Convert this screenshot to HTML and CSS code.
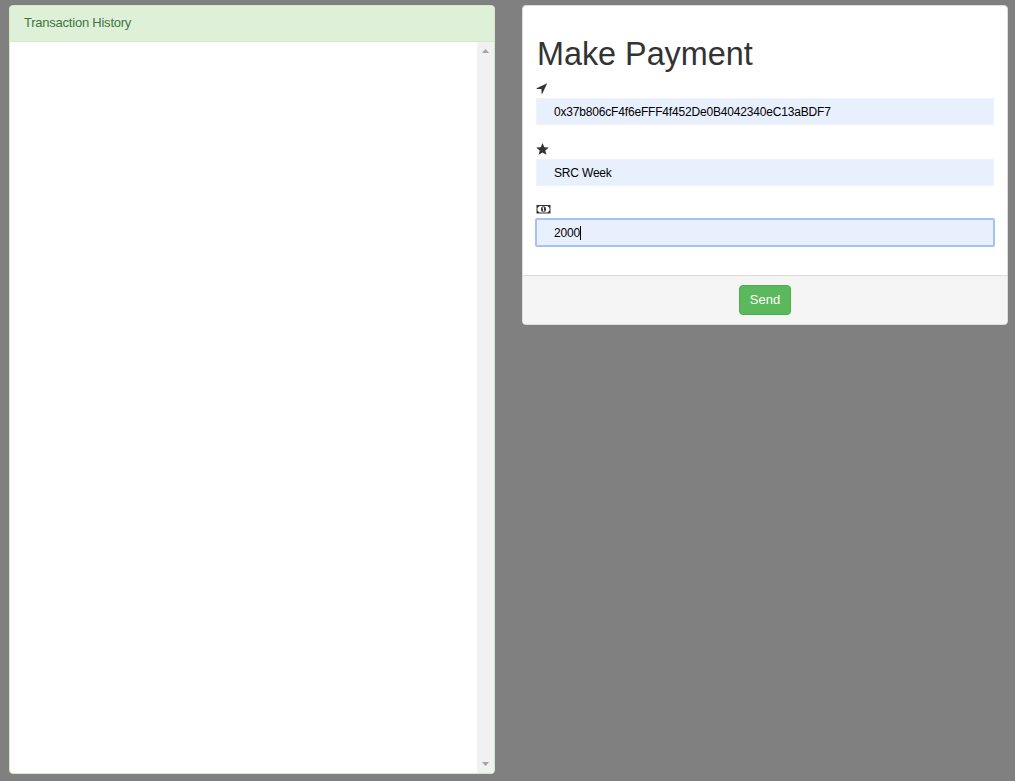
FILE: index.html
```
<!DOCTYPE html>
<html lang="en">
<head>
<meta charset="utf-8">
<title>Make Payment</title>
<link rel="stylesheet" href="styles.css">
</head>
<body>
<main class="page">
  <section class="panel history">
    <header class="history-heading">Transaction History</header>
    <div class="history-body">
      <div class="scrollbar">
        <svg width="7" height="4" viewBox="0 0 7 4"><path d="M0 4L3.5 0L7 4Z"/></svg>
        <svg width="7" height="4" viewBox="0 0 7 4"><path d="M0 0L3.5 4L7 0Z"/></svg>
      </div>
    </div>
  </section>
  <section class="panel payment">
    <div class="payment-body">
      <h1 class="title">Make Payment</h1>
      <div class="field recipient">
        <svg class="icon" width="15" height="12" viewBox="0 0 15 12"><path d="M11.2 1.2L6.3 11.8L5.5 11.6V7H.8L.6 6.3Z"/></svg>
        <div class="input">0x37b806cF4f6eFFF4f452De0B4042340eC13aBDF7</div>
      </div>
      <div class="field">
        <svg class="icon" width="15" height="12" viewBox="0 0 15 12"><path d="M6.5 0L8.3 4.2L12.8 4.5L9.3 7.4L10.4 11.8L6.5 9.4L2.6 11.8L3.7 7.4L.2 4.5L4.7 4.2Z"/></svg>
        <div class="input">SRC Week</div>
      </div>
      <div class="field">
        <svg class="icon" width="15" height="12" viewBox="0 0 15 12"><path fill-rule="evenodd" d="M.5 2H14.5V10.5H.5ZM3.5 3L1.5 4.9V7.6L3.5 9.5H11.5L13.5 7.6V4.9L11.5 3Z"/><path fill-rule="evenodd" d="M7.5 3.3C9 3.3 10 4.5 10 6.2S9 9.2 7.5 9.2S5 8 5 6.2S6 3.3 7.5 3.3ZM7.1 4.2L6.3 4.8V5.4H7V7.8H6.4V8.4H8.6V7.8H8V4.2Z"/></svg>
        <div class="input focused">2000<span class="caret"></span></div>
      </div>
    </div>
    <footer class="payment-footer"><button class="send" type="button">Send</button></footer>
  </section>
</main>
</body>
</html>
```
FILE: styles.css
```
* { box-sizing: border-box; }
body {
  margin: 0;
  background: #808080;
  color: #333;
  font: 13px/18px "Liberation Sans", Arial, sans-serif;
}
.page {
  display: grid;
  grid-template-columns: 486px 486px;
  column-gap: 27px;
  align-items: start;
  height: 781px;
  padding: 5px 0 0 9px;
}
.panel {
  display: flex;
  flex-direction: column;
  overflow: hidden;
  background: #fff;
  border: 1px solid #ddd;
  border-radius: 4px;
}
.history { height: 769px; border-color: #d6e9c6; }
.history-heading {
  height: 36px;
  padding: 8px 14px;
  color: #3c763d;
  background: #dff0d8;
  border-bottom: 1px solid #d6e9c6;
  letter-spacing: -0.23px;
}
.history-body { display: flex; flex: 1; justify-content: flex-end; }
.scrollbar {
  display: flex;
  flex-direction: column;
  justify-content: space-between;
  align-items: center;
  width: 17px;
  padding: 7px 0;
  background: #f1f1f1;
}
.scrollbar svg { fill: #a3a3a3; }
.payment { height: 320px; }
.payment-body { flex: 1; padding: 30px 13px 0; }
.title {
  margin: 0 0 10px;
  padding-left: 1px;
  font-size: 32.4px;
  font-weight: 500;
  line-height: 36px;
  letter-spacing: -0.03px;
}
.field { height: 60px; }
.recipient { height: 61px; }
.icon { display: block; fill: #333; }
.input {
  display: flex;
  align-items: center;
  width: 458px;
  height: 27px;
  margin-top: 4px;
  padding-left: 17px;
  color: #000;
  background: #e8f0fe;
  border: 1px solid #eff2f8;
  font-size: 12px;
  letter-spacing: -0.18px;
}
.focused {
  width: 460px;
  height: 29px;
  margin: 3px 0 0 -1px;
  border: 2px solid #a1c2fa;
  border-radius: 2px;
}
.caret { width: 1px; height: 14px; background: #000; }
.payment-footer {
  display: flex;
  justify-content: center;
  height: 49px;
  padding-top: 9px;
  background: #f5f5f5;
  border-top: 1px solid #ddd;
}
.send {
  width: 52px;
  height: 30px;
  padding: 0;
  color: #fff;
  background: #5cb85c;
  border: 1px solid #4cae4c;
  border-radius: 4px;
  font: inherit;
}
```
